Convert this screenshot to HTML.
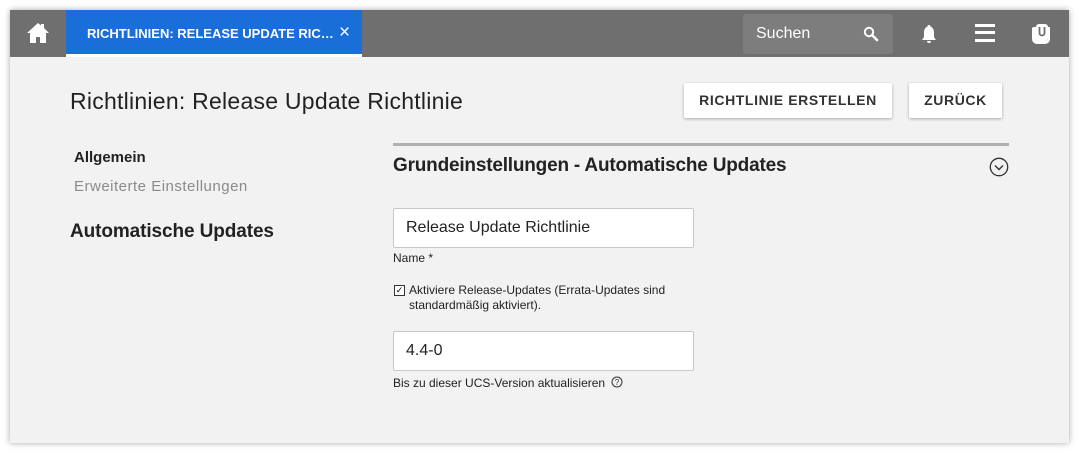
<!DOCTYPE html>
<html><head><meta charset="utf-8"><style>
body{margin:0;width:1079px;height:453px;background:#fff;font-family:"Liberation Sans",sans-serif;position:relative;overflow:hidden}
.win{position:absolute;left:10px;top:10px;width:1059px;height:433px;background:#f2f2f2;box-shadow:0 0 6px rgba(0,0,0,.35)}
.hdr{position:absolute;left:0;top:0;width:1059px;height:47px;background:#6f6f6f}
.a{position:absolute;white-space:nowrap}
.btn{position:absolute;background:#fff;box-shadow:0 1px 3px rgba(0,0,0,.3);font-size:14px;font-weight:bold;letter-spacing:.6px;color:#333;text-align:center;line-height:35px;height:35px;border-radius:2px}
.inp{position:absolute;background:#fff;border:1px solid #c8c8c8;border-radius:2px;width:301px;height:40px;font-size:16px;color:#222;line-height:38px;padding-left:12px;box-sizing:border-box}
</style></head><body>
<div class="win">
 <div class="hdr">
  <svg class="a" style="left:16px;top:12px" width="24" height="22" viewBox="0 0 24 22"><path d="M12 1L1 11h3v10h6v-6h4v6h6V11h3L18 6V2h-3v1.5z" fill="#fff"/></svg>
  <div class="a" style="left:56px;top:0;width:296px;height:44px;background:#1a6ed8"></div>
  <div class="a" style="left:56px;top:44px;width:296px;height:3px;background:#fff"></div>
  <div class="a" style="left:77px;top:16px;color:#fff;font-size:13px;font-weight:bold">RICHTLINIEN: RELEASE UPDATE RIC…</div>
  <div class="a" style="left:329px;top:12px;color:#fff;font-size:19px">×</div>
  <div class="a" style="left:733px;top:4px;width:150px;height:40px;background:#7d7d7d;border-radius:3px"></div>
  <div class="a" style="left:746px;top:15px;color:#fff;font-size:16px">Suchen</div>
  <svg class="a" style="left:853px;top:16px" width="16" height="16" viewBox="0 0 16 16"><circle cx="6" cy="6" r="4.2" stroke="#fff" stroke-width="2" fill="none"/><path d="M9 9l5 5" stroke="#fff" stroke-width="2.6" stroke-linecap="round"/></svg>
  <svg class="a" style="left:909px;top:14px" width="20" height="20" viewBox="0 0 20 20"><path d="M10 1c1 0 1.5.7 1.5 1.5C14 3.5 15 6 15 9v4l2 3H3l2-3V9c0-3 1-5.5 3.5-6.5C8.5 1.7 9 1 10 1zM8 17h4a2 2 0 01-4 0z" fill="#fff"/></svg>
  <div class="a" style="left:965px;top:14px;width:20px;height:3px;background:#fff"></div>
  <div class="a" style="left:965px;top:21px;width:20px;height:3px;background:#fff"></div>
  <div class="a" style="left:965px;top:29px;width:20px;height:3px;background:#fff"></div>
  <svg class="a" style="left:1021px;top:13px" width="20" height="21" viewBox="0 0 20 21"><path d="M3 4h2v11a3 3 0 003 3h6a3 3 0 003-3V4h2v12a5 5 0 01-5 5H6a5 5 0 01-5-5V6a2 2 0 012-2z" fill="#fff"/><rect x="5" y="1" width="12" height="17" rx="3" fill="#fff"/><path d="M8.5 4v6a2.5 2.5 0 005 0V4" stroke="#6f6f6f" stroke-width="1.8" fill="none"/></svg>
 </div>
 <div class="a" style="left:60px;top:78px;font-size:23px;color:#222;letter-spacing:.25px">Richtlinien: Release Update Richtlinie</div>
 <div class="btn" style="left:674px;top:73px;width:208px">RICHTLINIE ERSTELLEN</div>
 <div class="btn" style="left:899px;top:73px;width:93px">ZURÜCK</div>
 <div class="a" style="left:64px;top:139px;font-size:15px;font-weight:bold;color:#222">Allgemein</div>
 <div class="a" style="left:64px;top:168px;font-size:15px;color:#8a8a8a;letter-spacing:.5px">Erweiterte Einstellungen</div>
 <div class="a" style="left:60px;top:211px;font-size:19px;font-weight:bold;color:#222;letter-spacing:-.1px">Automatische Updates</div>
 <div class="a" style="left:383px;top:133px;width:616px;height:3px;background:#b0b0b0"></div>
 <div class="a" style="left:383px;top:145px;font-size:19px;font-weight:bold;color:#222;letter-spacing:-.2px">Grundeinstellungen - Automatische Updates</div>
 <svg class="a" style="left:979px;top:147px" width="20" height="20" viewBox="0 0 20 20"><circle cx="10" cy="10" r="8.7" stroke="#333" stroke-width="1.3" fill="none"/><path d="M6 8.5l4 4 4-4" stroke="#333" stroke-width="1.4" fill="none"/></svg>
 <div class="inp" style="left:383px;top:198px">Release Update Richtlinie</div>
 <div class="a" style="left:383px;top:241px;font-size:12px;color:#222">Name *</div>
 <div class="a" style="left:384px;top:275px;width:9px;height:9px;border:1px solid #333;background:#fff;font-size:9px;line-height:9px;text-align:center">✓</div>
 <div class="a" style="left:399px;top:273px;font-size:12px;color:#222;line-height:15px">Aktiviere Release-Updates (Errata-Updates sind<br>standardmäßig aktiviert).</div>
 <div class="inp" style="left:383px;top:321px">4.4-0</div>
 <div class="a" style="left:383px;top:366px;font-size:12px;color:#222">Bis zu dieser UCS-Version aktualisieren</div>
 <svg class="a" style="left:601px;top:366px" width="12" height="12" viewBox="0 0 12 12"><circle cx="6" cy="6" r="5" stroke="#333" fill="none"/><text x="6" y="9" font-size="8" text-anchor="middle" font-family="Liberation Sans" fill="#333">?</text></svg>
</div>
</body></html>
